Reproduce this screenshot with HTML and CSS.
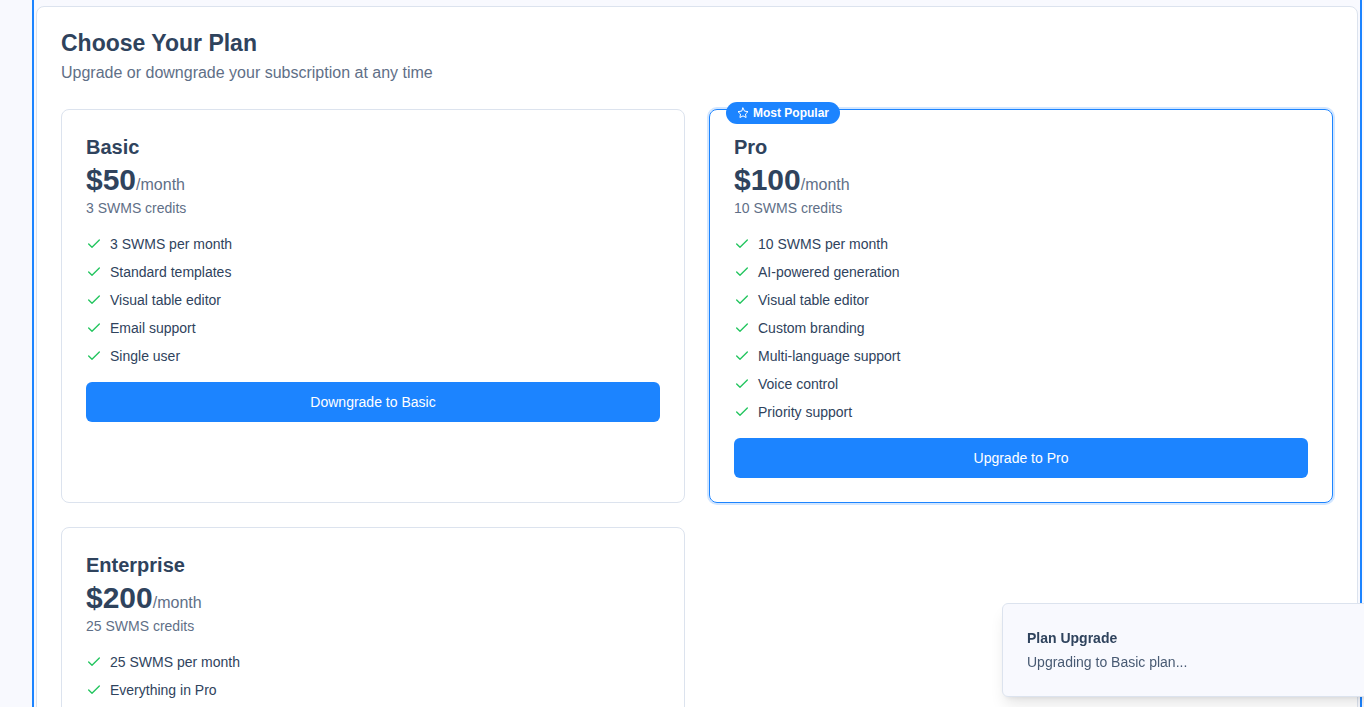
FILE: index.html
```
<!DOCTYPE html>
<html lang="en">
<head>
<meta charset="utf-8">
<meta name="viewport" content="width=device-width, initial-scale=1">
<title>Choose Your Plan</title>
<link rel="stylesheet" href="styles.css">
</head>
<body>
<svg width="0" height="0" class="sprite" aria-hidden="true">
  <symbol id="check" viewBox="0 0 24 24"><path d="M20 6 9 17l-5-5"/></symbol>
  <symbol id="star" viewBox="0 0 24 24"><path d="M12 2l3.09 6.26L22 9.27l-5 4.87 1.18 6.88L12 17.77l-6.18 3.25L7 14.14 2 9.27l6.91-1.01z"/></symbol>
</svg>
<main class="frame">
  <section class="panel">
    <header class="panel-header">
      <h1 class="panel-title">Choose Your Plan</h1>
      <p class="panel-subtitle">Upgrade or downgrade your subscription at any time</p>
    </header>
    <div class="plans">
      <article class="plan">
        <h2 class="plan-name">Basic</h2>
        <p class="plan-price"><strong class="amount">$50</strong><span class="period">/month</span></p>
        <p class="plan-credits">3 SWMS credits</p>
        <ul class="features">
          <li class="feature"><svg class="check"><use href="#check"/></svg>3 SWMS per month</li>
          <li class="feature"><svg class="check"><use href="#check"/></svg>Standard templates</li>
          <li class="feature"><svg class="check"><use href="#check"/></svg>Visual table editor</li>
          <li class="feature"><svg class="check"><use href="#check"/></svg>Email support</li>
          <li class="feature"><svg class="check"><use href="#check"/></svg>Single user</li>
        </ul>
        <button class="plan-button" type="button">Downgrade to Basic</button>
      </article>
      <article class="plan plan-popular">
        <div class="badge"><svg class="star"><use href="#star"/></svg>Most Popular</div>
        <h2 class="plan-name">Pro</h2>
        <p class="plan-price"><strong class="amount">$100</strong><span class="period">/month</span></p>
        <p class="plan-credits">10 SWMS credits</p>
        <ul class="features">
          <li class="feature"><svg class="check"><use href="#check"/></svg>10 SWMS per month</li>
          <li class="feature"><svg class="check"><use href="#check"/></svg>AI-powered generation</li>
          <li class="feature"><svg class="check"><use href="#check"/></svg>Visual table editor</li>
          <li class="feature"><svg class="check"><use href="#check"/></svg>Custom branding</li>
          <li class="feature"><svg class="check"><use href="#check"/></svg>Multi-language support</li>
          <li class="feature"><svg class="check"><use href="#check"/></svg>Voice control</li>
          <li class="feature"><svg class="check"><use href="#check"/></svg>Priority support</li>
        </ul>
        <button class="plan-button" type="button">Upgrade to Pro</button>
      </article>
      <article class="plan">
        <h2 class="plan-name">Enterprise</h2>
        <p class="plan-price"><strong class="amount">$200</strong><span class="period">/month</span></p>
        <p class="plan-credits">25 SWMS credits</p>
        <ul class="features">
          <li class="feature"><svg class="check"><use href="#check"/></svg>25 SWMS per month</li>
          <li class="feature"><svg class="check"><use href="#check"/></svg>Everything in Pro</li>
        </ul>
      </article>
    </div>
  </section>
</main>
<div class="toast" role="status">
  <p class="toast-title">Plan Upgrade</p>
  <p class="toast-text">Upgrading to Basic plan...</p>
</div>
</body>
</html>
```
FILE: styles.css
```
:root {
  --blue: #1c84ff;
  --ink: #2f435d;
  --muted: #5f6f87;
  --line: #dce3ee;
  --surface: #f8f9fe;
}

* {
  box-sizing: border-box;
  margin: 0;
  padding: 0;
}

body {
  height: 100vh;
  overflow: hidden;
  background: var(--surface);
  color: var(--ink);
  font-family: "Liberation Sans", Arial, sans-serif;
  font-size: 14px;
  line-height: 20px;
}

.sprite {
  position: absolute;
}

.frame {
  margin: 0 2px 0 32px;
  padding: 6px 2px 24px;
  border: solid var(--blue);
  border-width: 0 2px;
}

.panel {
  padding: 24px;
  border: 1px solid var(--line);
  border-radius: 8px;
  background: #fff;
}

.panel-header {
  display: flex;
  flex-direction: column;
  gap: 6px;
  padding-bottom: 24px;
}

.panel-title {
  font-size: 23px;
  line-height: 24px;
}

.panel-subtitle {
  color: var(--muted);
  font-size: 16px;
  line-height: 24px;
}

.plans {
  display: grid;
  grid-template-columns: repeat(2, 1fr);
  gap: 24px;
}

.plan {
  position: relative;
  padding: 24px;
  border: 1px solid var(--line);
  border-radius: 8px;
}

.plan-popular {
  border-color: var(--blue);
  box-shadow: 0 0 0 2px #d2e6ff;
}

.badge {
  position: absolute;
  top: -8px;
  left: 16px;
  display: flex;
  align-items: center;
  gap: 4px;
  padding: 3px 11px;
  border-radius: 11px;
  background: var(--blue);
  color: #fff;
  font-size: 12px;
  font-weight: 700;
  line-height: 16px;
}

.star,
.check {
  flex: none;
  fill: none;
  stroke: currentColor;
  stroke-width: 2;
  stroke-linecap: round;
  stroke-linejoin: round;
}

.star {
  width: 12px;
  height: 12px;
}

.check {
  width: 16px;
  height: 16px;
  color: #22c55e;
}

.plan-name {
  margin-bottom: 2px;
  font-size: 20px;
  line-height: 26px;
}

.plan-price {
  height: 36px;
  line-height: 36px;
}

.amount {
  font-size: 30px;
}

.period {
  color: var(--muted);
  font-size: 16px;
}

.plan-credits {
  color: var(--muted);
}

.features {
  display: flex;
  flex-direction: column;
  gap: 8px;
  margin: 16px 0;
  list-style: none;
}

.feature {
  display: flex;
  align-items: center;
  gap: 8px;
}

.plan-button {
  display: block;
  width: 100%;
  height: 40px;
  border: 0;
  border-radius: 6px;
  background: var(--blue);
  color: #fff;
  font: inherit;
}

.toast {
  position: fixed;
  right: -24px;
  bottom: 10px;
  display: flex;
  flex-direction: column;
  gap: 4px;
  width: 386px;
  padding: 24px;
  border: 1px solid var(--line);
  border-radius: 6px;
  background: var(--surface);
  box-shadow: 0 10px 15px -3px rgba(0, 0, 0, 0.1), 0 4px 6px -4px rgba(0, 0, 0, 0.1);
}

.toast-title {
  font-weight: 700;
}

.toast-text {
  color: #485a73;
}
```
